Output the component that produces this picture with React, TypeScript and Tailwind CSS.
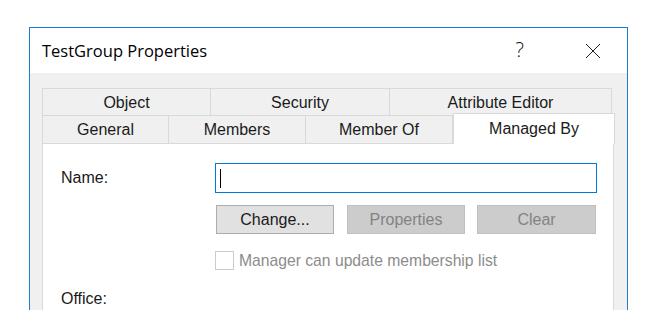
import React from 'react'

const font = { fontFamily: '"Liberation Sans", Arial, sans-serif' }

function Tab({ label, w, last }: { label: string; w: number; last?: boolean }) {
  return (
    <div
      className={`flex h-full items-center justify-center border border-b-0 border-[#d9d9d9] bg-[#f0f0f0] text-[16px] text-[#1a1a1a] ${last ? '' : '-mr-px'}`}
      style={{ width: w }}
    >
      {label}
    </div>
  )
}

export default function App() {
  return (
    <div className="h-[310px] w-[671px] overflow-hidden bg-white" style={font}>
      <div className="ml-[29px] mt-[27px] h-[320px] w-[599px] border border-[#1f7bd1] bg-[#f0f0f0]">
        {/* title bar */}
        <div className="flex h-[45px] items-center bg-white pl-[12px]">
          <span className="pt-[2px] text-[16.5px] text-black" style={{ fontFamily: '"Open Sans", "Noto Sans", sans-serif' }}>
            TestGroup Properties
          </span>
          <span className="ml-auto mr-[61px] pb-[2px] text-[20px] text-[#111]" style={{ fontFamily: '"Open Sans", sans-serif', fontWeight: 300 }}>?</span>
          <svg width="16" height="16" viewBox="0 0 16 16" className="mr-[26px]">
            <path d="M1 1 L15 15 M15 1 L1 15" stroke="#222" strokeWidth="1" fill="none" />
          </svg>
        </div>

        <div className="pl-[12px] pt-[15px]">
          {/* upper tab row */}
          <div className="flex h-[28px]">
            <Tab label="Object" w={169} />
            <Tab label="Security" w={180} />
            <Tab label="Attribute Editor" w={223} last />
          </div>
          {/* lower tab row */}
          <div className="-mt-px flex h-[28px] items-end">
            <Tab label="General" w={127} />
            <Tab label="Members" w={138} />
            <Tab label="Member Of" w={148} last />
            <div className="relative z-10 -mb-px flex h-[31px] w-[162px] items-start justify-center border border-b-0 border-[#d9d9d9] bg-white pt-[3px] text-[16px] text-[#1a1a1a]">
              Managed By
            </div>
          </div>

          {/* page */}
          <div className="h-[200px] w-[572px] border border-[#d9d9d9] bg-white pl-[18px] pt-[19px]">
            <div className="flex items-center">
              <span className="w-[154px] text-[16px] text-[#1a1a1a]">Name:</span>
              <div className="flex h-[30px] w-[382px] items-center border border-[#0078d7] pl-[4px]">
                <div className="h-[19px] w-px bg-black" />
              </div>
            </div>

            <div className="ml-[155px] mt-[12px] flex gap-[13px]">
              <div className="flex h-[29px] w-[118px] items-center justify-center border border-[#adadad] bg-[#e1e1e1] text-[16px] text-[#1a1a1a]">
                Change...
              </div>
              <div className="flex h-[29px] w-[118px] items-center justify-center border border-[#bfbfbf] bg-[#cccccc] text-[16px] text-[#838383]">
                Properties
              </div>
              <div className="ml-[-1px] flex h-[29px] w-[119px] items-center justify-center border border-[#bfbfbf] bg-[#cccccc] text-[16px] text-[#838383]">
                Clear
              </div>
            </div>

            <div className="ml-[154px] mt-[15px] flex items-center">
              <div className="h-[19px] w-[19px] border border-[#cccccc] bg-white" />
              <span className="ml-[5px] text-[15.7px] text-[#8c8c8c]">Manager can update membership list</span>
            </div>

            <div className="mt-[14px] text-[16px] text-[#1a1a1a]">Office:</div>
          </div>
        </div>
      </div>
    </div>
  )
}
